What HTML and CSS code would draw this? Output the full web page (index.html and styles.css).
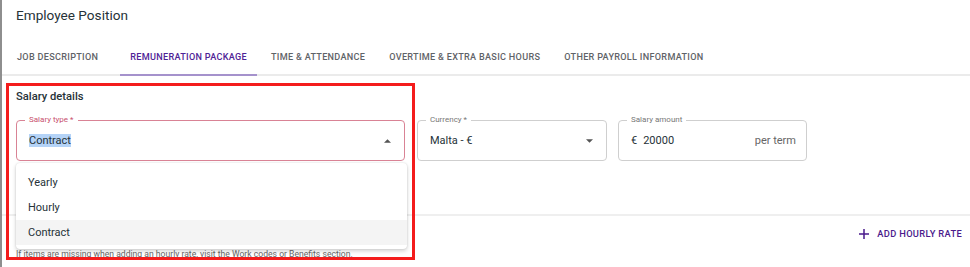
FILE: index.html
```html
<!DOCTYPE html>
<html lang="en">
<head>
  <meta charset="UTF-8">
  <title>Employee Position</title>
  <link rel="stylesheet" href="styles.css">
</head>
<body>
<div class="page">
  <div class="header">Employee Position</div>

  <div class="tabs">
    <div class="tab">Job description</div>
    <div class="tab active">Remuneration package</div>
    <div class="tab">Time &amp; attendance</div>
    <div class="tab">Overtime &amp; extra basic hours</div>
    <div class="tab">Other payroll information</div>
  </div>

  <div class="section">
    <div class="section-title">Salary details</div>

    <div class="fields">
      <div class="field field-type focused">
        <span class="field-label">Salary type *</span>
        <span class="field-value"><span class="selected">Contract</span></span>
        <svg class="arrow" width="7" height="4" viewBox="0 0 10 5"><path d="M0 5 L5 0 L10 5z" fill="#555"/></svg>

        <!-- opened select menu -->
        <div class="menu">
          <div class="menu-item">Yearly</div>
          <div class="menu-item">Hourly</div>
          <div class="menu-item current">Contract</div>
        </div>
      </div>

      <div class="field field-currency">
        <span class="field-label">Currency *</span>
        <span class="field-value">Malta - €</span>
        <svg class="arrow" width="7" height="4" viewBox="0 0 10 5"><path d="M0 0 L5 5 L10 0z" fill="#555"/></svg>
      </div>

      <div class="field field-amount">
        <span class="field-label">Salary amount</span>
        <span class="field-value"><span class="prefix">€</span>20000</span>
        <span class="suffix">per term</span>
      </div>
    </div>
  </div>

  <div class="actions">
    <div class="add-btn">
      <svg width="10" height="10" viewBox="0 0 10 10"><path d="M5 0 V10 M0 5 H10" stroke="#4a1a8c" stroke-width="1.5"/></svg>
      <span>Add hourly rate</span>
    </div>
  </div>
  <div class="helper">If items are missing when adding an hourly rate, visit the Work codes or Benefits section.</div>

  <!-- annotation box -->
  <div class="highlight-box"></div>
</div>
</body>
</html>
```

FILE: styles.css
```css
* {
    box-sizing: border-box;
}

body {
    margin: 0;
    background: #fff;
    font-family: Roboto, "Liberation Sans", sans-serif;
    color: #263238;
}

.page {
    position: relative;
    height: 267px;
    border-left: 2px solid #8e8e8e;
}

.header {
    height: 40px;
    padding: 6px 14px 0;
    font-size: 13.6px;
    line-height: 18px;
}

/* tabs */
.tabs {
    display: flex;
    gap: 4px;
    height: 36px;
    padding-left: 5px;
    border-bottom: 2px solid #ebebeb;
}

.tab {
    padding: 0 10px;
    font-size: 9.1px;
    font-weight: 500;
    letter-spacing: 0.3px;
    text-transform: uppercase;
    color: #5f6368;
    line-height: 34px;
    border-bottom: 2px solid transparent;
    margin-bottom: -2px;
}

.tab:first-child {
    margin-right: 8px;
}

.tab.active {
    color: #4f2396;
    border-bottom-color: #a592cc;
}

/* salary section */
.section {
    padding: 14px 14px 0;
}

.section-title {
    font-size: 11.2px;
    font-weight: 500;
    line-height: 14px;
}

.fields {
    display: flex;
    gap: 12px;
    margin-top: 16px;
}

.field {
    position: relative;
    display: flex;
    align-items: center;
    height: 41px;
    padding: 0 12px;
    border: 1px solid #cfcfcf;
    border-radius: 4px;
    font-size: 11px;
}

.field-type {
    width: 389px;
}

.field-currency {
    width: 190px;
}

.field-amount {
    width: 189px;
    margin-left: -1px;
    padding-right: 10px;
}

.field.focused {
    border-color: #d98395;
}

.field-label {
    position: absolute;
    top: -6px;
    left: 8px;
    padding: 0 4px;
    background: #fff;
    font-size: 8px;
    line-height: 10px;
    color: #777;
}

.focused .field-label {
    color: #c8506e;
}

.field-value {
    flex: 1;
}

.selected {
    background: #b4d3f7;
}

.prefix {
    margin-right: 6px;
}

.suffix {
    color: #666;
}

.arrow {
    margin-right: 1px;
}

/* dropdown */
.menu {
    position: absolute;
    top: 42px;
    left: -1px;
    width: 391px;
    padding: 7px 0 4px;
    background: #fff;
    border-radius: 4px;
    box-shadow: 0 2px 4px rgba(0, 0, 0, 0.18), 0 0 2px rgba(0, 0, 0, 0.12);
    z-index: 2;
}

.menu-item {
    height: 25px;
    line-height: 26px;
    padding: 0 12px;
    font-size: 11px;
}

.menu-item.current {
    background: #f4f4f4;
}

/* bottom */
.actions {
    display: flex;
    justify-content: flex-end;
    margin-top: 53px;
    padding: 9px 8px 0;
    height: 35px;
    border-top: 2px solid #efefef;
}

.add-btn {
    display: flex;
    align-items: center;
    gap: 8px;
    height: 17px;
    font-size: 9.3px;
    font-weight: 500;
    letter-spacing: 0.33px;
    text-transform: uppercase;
    color: #4a1a8c;
}

.helper {
    padding: 0 14px;
    font-size: 8.6px;
    line-height: 10px;
    color: #666;
}

.highlight-box {
    position: absolute;
    left: 4px;
    top: 83px;
    width: 409px;
    height: 177px;
    border: 3px solid #f41c1c;
    z-index: 3;
}
```
